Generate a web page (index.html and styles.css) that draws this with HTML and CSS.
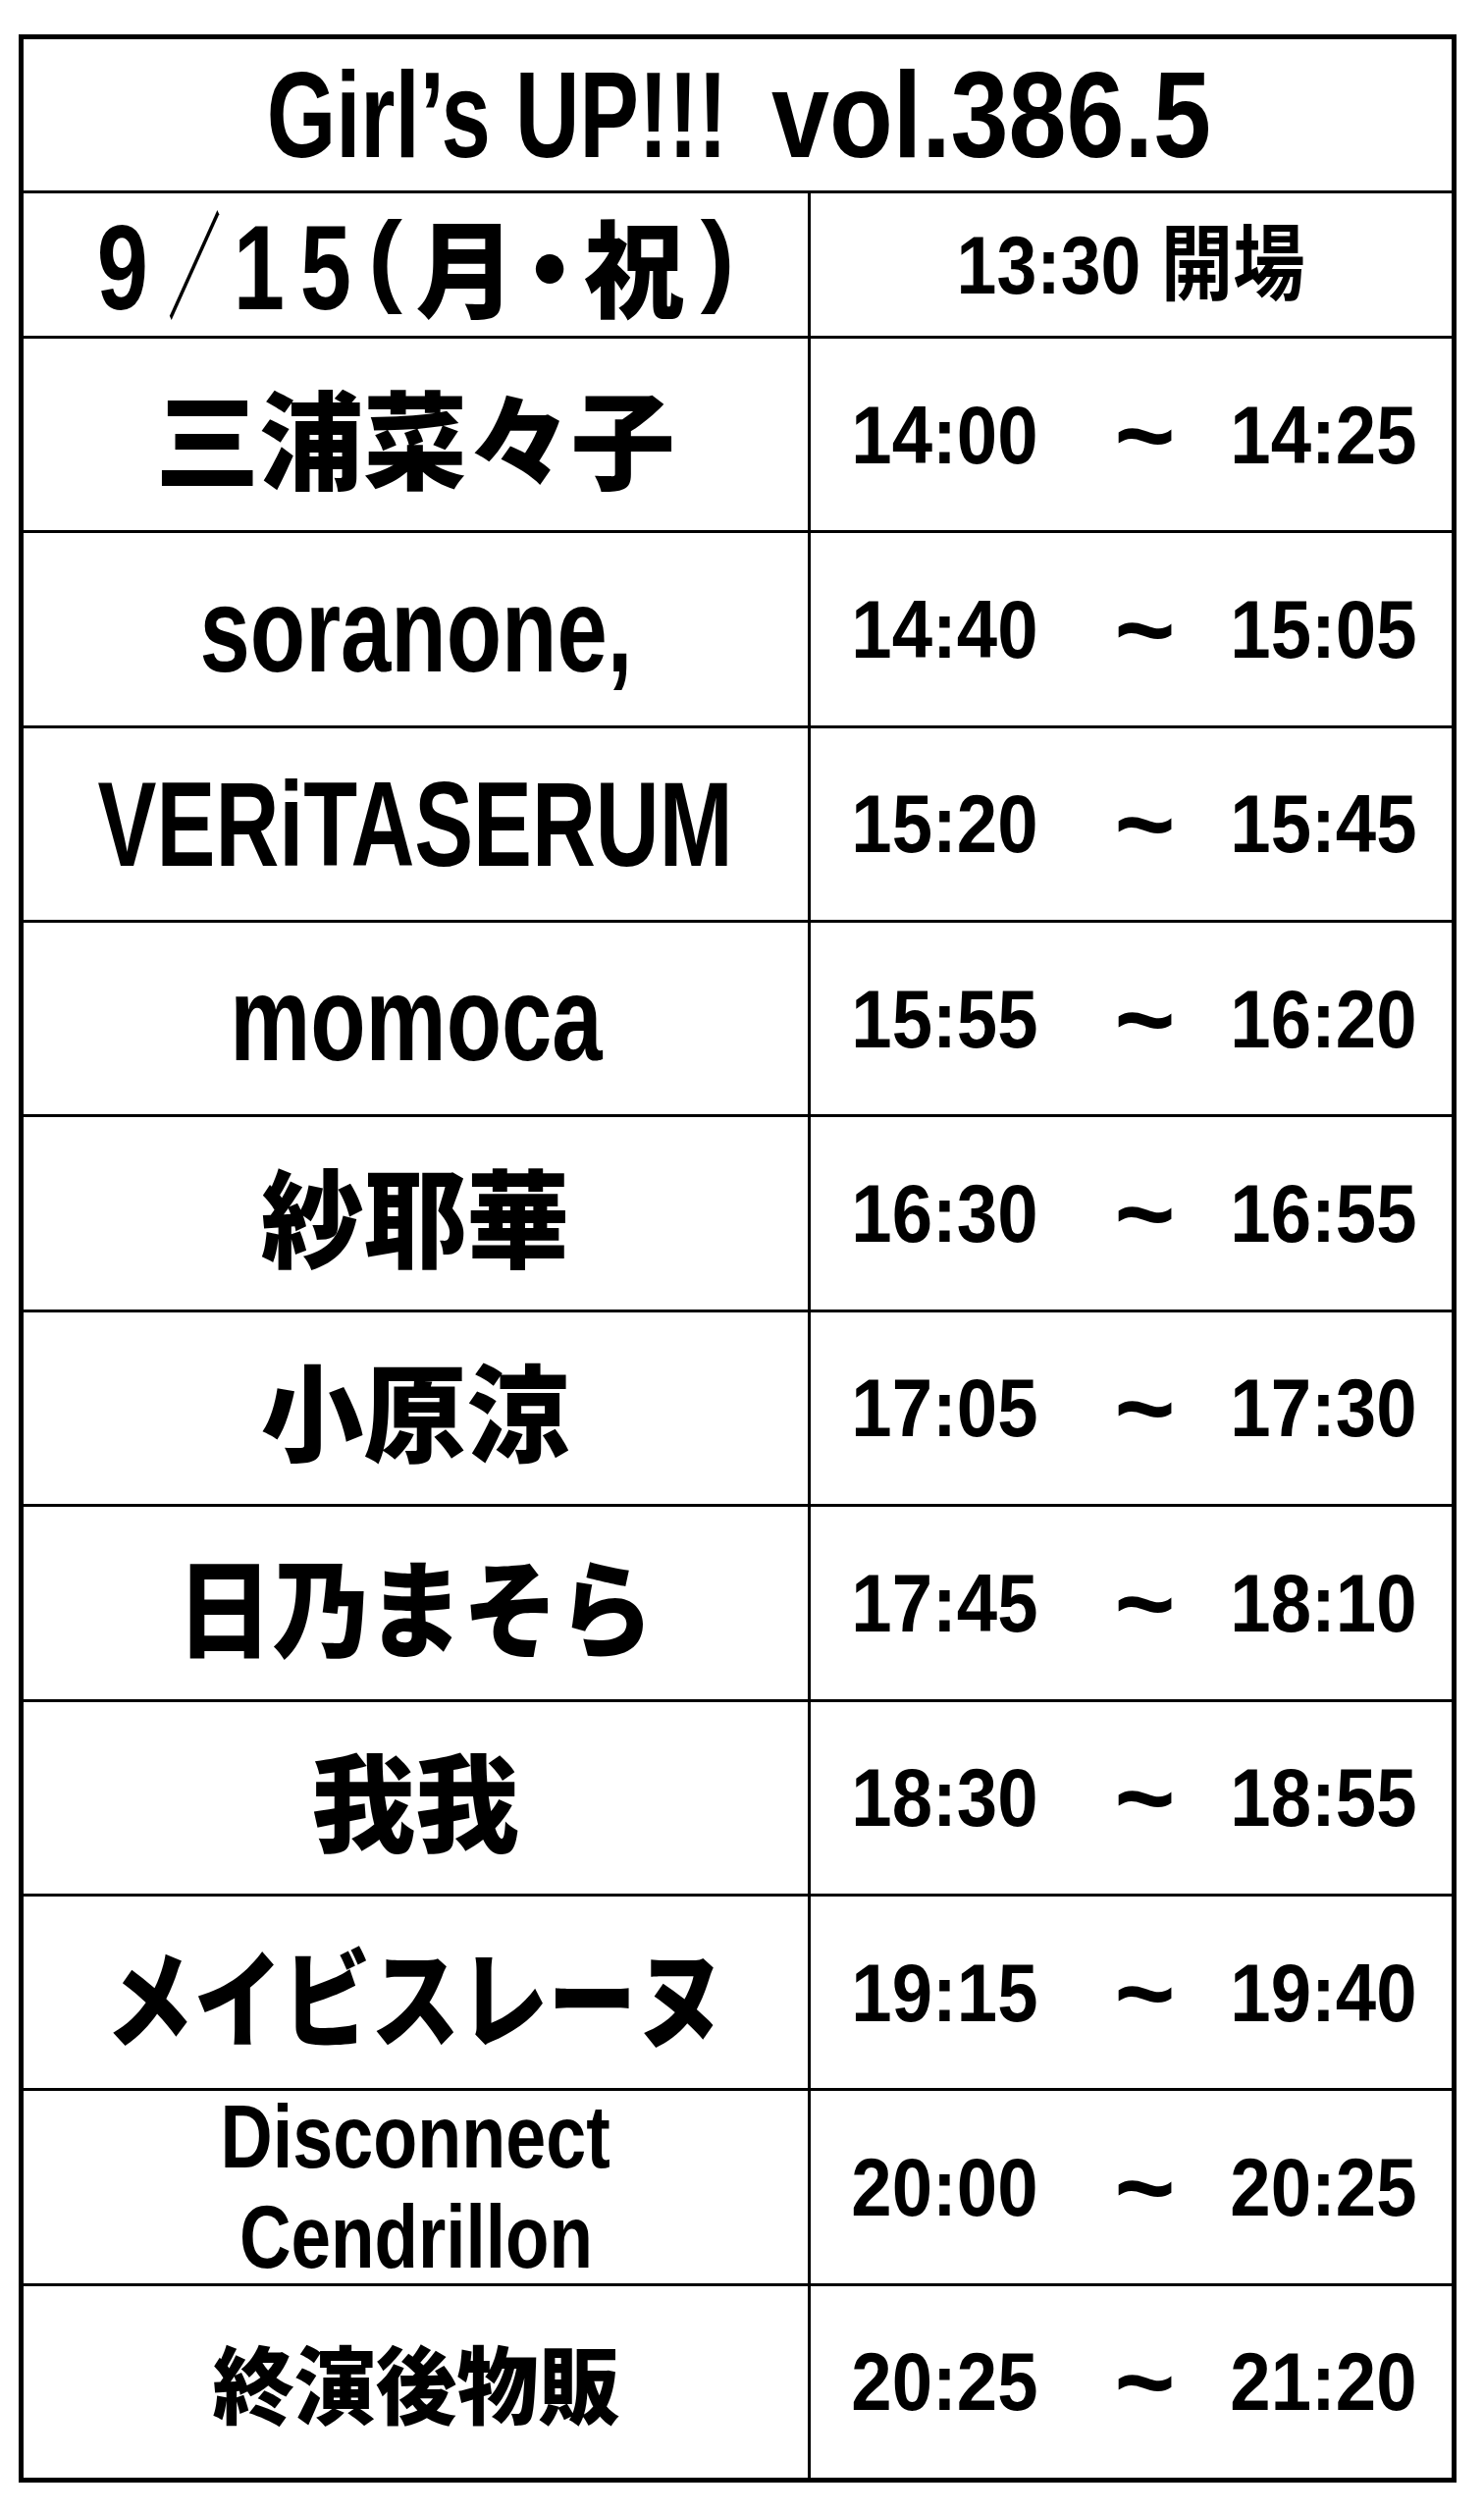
FILE: index.html
```html
<!DOCTYPE html>
<html lang="ja">
<head>
<meta charset="utf-8">
<title>Girl’s UP!!! vol.386.5</title>
<link rel="stylesheet" href="styles.css">
</head>
<body>
<main class="sheet">
  <div class="cell title">
    <div class="tbox tbox-a"><span class="sq x73">Girl’s UP!!!</span></div>
    <div class="tbox tbox-b"><span class="sq x855">vol.386.5</span></div>
  </div>
  <div class="cell date">
    <div class="dline"><span class="g w41"><span class="sq d-dig">9</span></span><span class="g w53 m27"><span class="sq d-slash">／</span></span><span class="g w32 m23"><span class="sq d-dig">1</span></span><span class="g w44 m30"><span class="sq d-dig">5</span></span><span class="g w33 m22"><span class="sq d-par">(</span></span><span class="g w261 m25"><span class="sq d-ja">月・祝</span></span><span class="g w34 m19"><span class="sq d-par">)</span></span></div>
  </div>
  <div class="cell open"><span class="sq x874">13:30 開場</span></div>

  <div class="cell name ja"><span class="sq x98">三浦菜々子</span></div>
  <div class="cell time"><div class="hm"><span class="sq x885">14:00</span></div><span class="tilde">~</span><div class="hm"><span class="sq x885">14:25</span></div></div>

  <div class="cell name en"><span class="sq x75">soranone,</span></div>
  <div class="cell time"><div class="hm"><span class="sq x885">14:40</span></div><span class="tilde">~</span><div class="hm"><span class="sq x885">15:05</span></div></div>

  <div class="cell name en"><span class="sq x73">VERiTASERUM</span></div>
  <div class="cell time"><div class="hm"><span class="sq x885">15:20</span></div><span class="tilde">~</span><div class="hm"><span class="sq x885">15:45</span></div></div>

  <div class="cell name en"><span class="sq x75">momoca</span></div>
  <div class="cell time"><div class="hm"><span class="sq x885">15:55</span></div><span class="tilde">~</span><div class="hm"><span class="sq x885">16:20</span></div></div>

  <div class="cell name ja"><span class="sq x97">紗耶華</span></div>
  <div class="cell time"><div class="hm"><span class="sq x885">16:30</span></div><span class="tilde">~</span><div class="hm"><span class="sq x885">16:55</span></div></div>

  <div class="cell name ja"><span class="sq x97">小原涼</span></div>
  <div class="cell time"><div class="hm"><span class="sq x885">17:05</span></div><span class="tilde">~</span><div class="hm"><span class="sq x885">17:30</span></div></div>

  <div class="cell name ja"><span class="sq x90">日乃まそら</span></div>
  <div class="cell time"><div class="hm"><span class="sq x885">17:45</span></div><span class="tilde">~</span><div class="hm"><span class="sq x885">18:10</span></div></div>

  <div class="cell name ja"><span class="sq x98">我我</span></div>
  <div class="cell time"><div class="hm"><span class="sq x885">18:30</span></div><span class="tilde">~</span><div class="hm"><span class="sq x885">18:55</span></div></div>

  <div class="cell name ja"><span class="sq x835">メイビスレーヌ</span></div>
  <div class="cell time"><div class="hm"><span class="sq x885">19:15</span></div><span class="tilde">~</span><div class="hm"><span class="sq x885">19:40</span></div></div>

  <div class="cell name en-two">
    <span class="sq x81">Disconnect</span>
    <span class="sq x80">Cendrillon</span>
  </div>
  <div class="cell time"><div class="hm"><span class="sq x885">20:00</span></div><span class="tilde">~</span><div class="hm"><span class="sq x885">20:25</span></div></div>

  <div class="cell name ja-small"><span class="sq x965">終演後物販</span></div>
  <div class="cell time"><div class="hm"><span class="sq x885">20:25</span></div><span class="tilde">~</span><div class="hm"><span class="sq x885">21:20</span></div></div>
</main>
</body>
</html>
```

FILE: styles.css
```css
html, body {
  margin: 0;
  padding: 0;
  background: #fff;
}

body {
  color: #000;
  font-family: "Liberation Sans", "Noto Sans CJK JP", sans-serif;
  font-weight: 700;
}

.sheet {
  box-sizing: border-box;
  width: 1465px;
  height: 2494px;
  margin: 35px 0 0 19px;
  border: 5px solid #000;
  background: #000;
  display: grid;
  grid-template-columns: 799px 653px;
  grid-template-rows: 154px 145px repeat(11, minmax(0, 1fr));
  gap: 3px;
}

.cell {
  background: #fff;
  display: flex;
  align-items: center;
  justify-content: center;
  white-space: nowrap;
  line-height: 1;
  min-width: 0;
  min-height: 0;
}

.sq {
  display: inline-block;
  transform-origin: center center;
}

/* title */
.title {
  grid-column: 1 / -1;
  gap: 42px;
  font-size: 124px;
}
.tbox {
  display: flex;
  justify-content: center;
}
.tbox-a { width: 474px; }
.tbox-b { width: 448px; }

/* date */
.date {
  font-size: 122px;
  padding-left: 5px;
}
.dline {
  display: flex;
  align-items: baseline;
}
.g {
  display: block;
  text-align: center;
}
.g > .sq {
  margin: 0 -60px;
}
.d-dig {
  transform: scaleX(0.77);
}
.d-slash {
  font-family: "Noto Sans CJK JP", sans-serif;
  font-weight: 900;
  font-size: 118px;
  transform: scaleX(0.45);
}
.d-par {
  font-size: 104px;
  vertical-align: 17px;
}
.d-ja {
  font-family: "Noto Sans CJK JP", sans-serif;
  font-weight: 900;
  font-size: 107px;
  font-feature-settings: "palt";
  letter-spacing: 10px;
  margin-right: -70px;
  transform: scaleX(0.95);
}
.w32 { width: 32px; }
.w33 { width: 33px; }
.w34 { width: 34px; }
.w41 { width: 41px; }
.w44 { width: 44px; }
.w53 { width: 53px; }
.w261 { width: 261px; }
.m19 { margin-left: 19px; }
.m22 { margin-left: 22px; }
.m23 { margin-left: 23px; }
.m25 { margin-left: 25px; }
.m27 { margin-left: 27px; }
.m30 { margin-left: 30px; }

.open {
  font-size: 84px;
}

/* names */
.ja {
  font-family: "Noto Sans CJK JP", sans-serif;
  font-weight: 900;
  font-size: 108px;
}
.ja-small {
  font-family: "Noto Sans CJK JP", sans-serif;
  font-weight: 900;
  font-size: 86px;
}
.en {
  font-size: 123px;
}
.en-two {
  flex-direction: column;
  font-size: 91px;
  line-height: 102px;
}

/* times */
.time {
  padding-left: 6px;
  font-size: 84px;
}
.hm {
  width: 190px;
  display: flex;
  justify-content: center;
}
.tilde {
  width: 62px;
  display: flex;
  justify-content: center;
  margin: 0 56px 0 78px;
  font-family: "Liberation Sans", sans-serif;
  font-weight: 700;
  font-size: 106px;
}

/* horizontal condensing */
.x73 { transform: scaleX(0.73); }
.x75 { transform: scaleX(0.75); }
.x80 { transform: scaleX(0.80); }
.x81 { transform: scaleX(0.81); }
.x835 { transform: scaleX(0.835); }
.x855 { transform: scaleX(0.855); }
.x874 { transform: scaleX(0.874); }
.x885 { transform: scaleX(0.885); }
.x90 { transform: scaleX(0.90); }
.x965 { transform: scaleX(0.965); }
.x97 { transform: scaleX(0.97); }
.x98 { transform: scaleX(0.98); }
```
